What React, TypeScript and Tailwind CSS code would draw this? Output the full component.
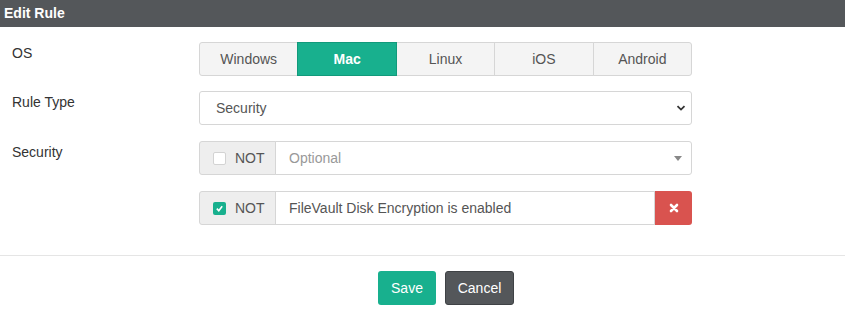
import { useState } from 'react'

const osList = ['Windows', 'Mac', 'Linux', 'iOS', 'Android']

export default function App() {
  const [os, setOs] = useState('Mac')

  return (
    <div className="w-[845px] h-[311px] bg-white text-[14px] text-[#333] font-['Liberation_Sans',Arial,sans-serif]">
      <div className="h-[27px] bg-[#54575a] text-white font-bold px-[4px] leading-[26px]">Edit Rule</div>

      <div className="pt-[15px] pl-[12px] pr-[153px]">
        {/* OS */}
        <div className="flex mb-[15px]">
          <label className="w-[187px] pt-[1px] leading-[20px]">OS</label>
          <div className="flex flex-1">
            {osList.map((name, i) => (
              <button
                key={name}
                onClick={() => setOs(name)}
                className={
                  'flex-1 h-[34px] border ' +
                  (i === 0 ? 'rounded-l-[3px] ' : '') +
                  (i === osList.length - 1 ? 'rounded-r-[3px] ' : '') +
                  (i > 0 ? '-ml-px ' : '') +
                  (os === name
                    ? 'bg-[#18b08e] border-[#119a7b] text-white font-bold relative'
                    : 'bg-[#f4f4f4] border-[#d6d6d6] text-[#555]')
                }
              >
                {name}
              </button>
            ))}
          </div>
        </div>

        {/* Rule type */}
        <div className="flex mb-[16px]">
          <label className="w-[187px] pt-[1px] leading-[20px]">Rule Type</label>
          <div className="flex-1 h-[34px] border border-[#d6d6d6] rounded-[3px] flex items-center pl-[16px] pr-[4px] text-[#555]">
            <span className="flex-1">Security</span>
            <svg width="10" height="10" viewBox="0 0 10 10" className="mr-[1px]">
              <path d="M1.5 3.2 L5 6.6 L8.5 3.2" fill="none" stroke="#333" strokeWidth="1.8" />
            </svg>
          </div>
        </div>

        {/* Security */}
        <div className="flex mb-[16px]">
          <label className="w-[187px] pt-[1px] leading-[20px]">Security</label>
          <div className="flex-1 flex h-[34px]">
            <div className="w-[77px] bg-[#eee] border border-[#d6d6d6] rounded-l-[3px] flex items-center pl-[13px] gap-[9px] text-[#555]">
              <span className="w-[13px] h-[13px] bg-white border border-[#d3d3d3] rounded-[2px]" />
              NOT
            </div>
            <div className="flex-1 -ml-px border border-[#d6d6d6] rounded-r-[3px] flex items-center pl-[13px] pr-[9px] text-[#999]">
              <span className="flex-1">Optional</span>
              <svg width="8" height="5" viewBox="0 0 8 5">
                <path d="M0 0 L8 0 L4 5 Z" fill="#888" />
              </svg>
            </div>
          </div>
        </div>

        <div className="flex">
          <div className="w-[187px]" />
          <div className="flex-1 flex h-[34px]">
            <div className="w-[77px] bg-[#eee] border border-[#d6d6d6] rounded-l-[3px] flex items-center pl-[13px] gap-[9px] text-[#555]">
              <span className="w-[13px] h-[13px] bg-[#18b08e] rounded-[2px] flex items-center justify-center">
                <svg width="9" height="9" viewBox="0 0 10 10">
                  <path d="M2 5.2 L4.2 7.4 L8 2.5" fill="none" stroke="#fff" strokeWidth="1.8" />
                </svg>
              </span>
              NOT
            </div>
            <div className="flex-1 -ml-px border border-[#d6d6d6] flex items-center pl-[13px] text-[#555]">
              FileVault Disk Encryption is enabled
            </div>
            <button className="w-[37px] bg-[#d9534f] rounded-r-[3px] flex items-center justify-center">
              <svg width="10" height="10" viewBox="0 0 10 10">
                <path d="M2 2 L8 8 M8 2 L2 8" stroke="#fff" strokeWidth="2.6" strokeLinecap="round" />
              </svg>
            </button>
          </div>
        </div>
      </div>

      <div className="mt-[30px] border-t border-[#e5e5e5] flex justify-center gap-[9px] pt-[15px] pl-[47px]">
        <button className="h-[34px] w-[58px] rounded-[3px] bg-[#18b08e] text-white">Save</button>
        <button className="h-[34px] w-[69px] rounded-[3px] bg-[#54575a] border border-[#3f4245] text-white">Cancel</button>
      </div>
    </div>
  )
}
